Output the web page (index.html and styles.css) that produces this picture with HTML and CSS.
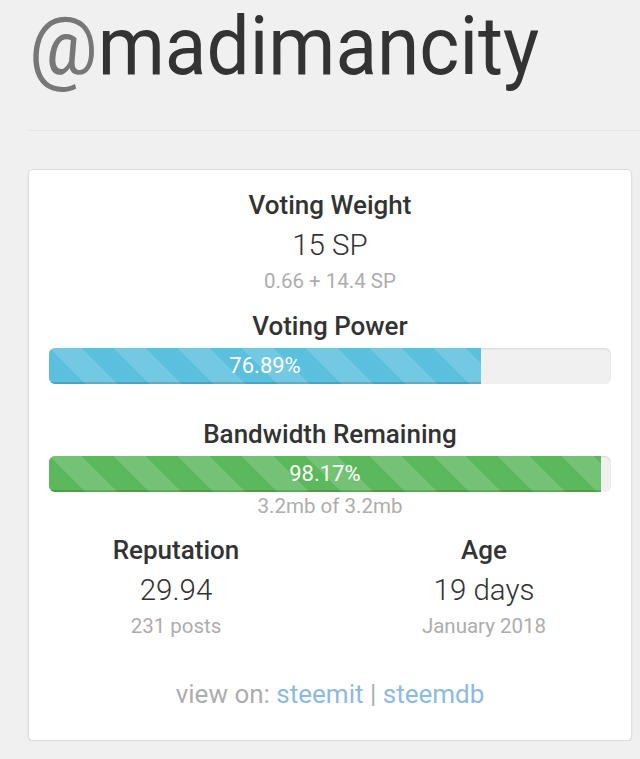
FILE: index.html
```html
<!DOCTYPE html>
<html lang="en">
	<head>
		<meta charset="UTF-8">
		<meta name="viewport" content="width=device-width, initial-scale=1.0">
		<title>@madimancity</title>
		<link rel="stylesheet" href="styles.css">
	</head>
	<body>
		<h1 class="title"><span class="name"><span class="at">@</span>madimancity</span></h1>
		<hr class="rule">
		<div class="card">
			<div class="stat">
				<h3>Voting Weight</h3>
				<div class="big">15 SP</div>
				<div class="small">0.66 + 14.4 SP</div>
			</div>
			<div class="stat vp">
				<h3>Voting Power</h3>
				<div class="progress">
					<div class="bar bar-blue" style="width:76.89%">76.89%</div>
				</div>
			</div>
			<div class="stat bw">
				<h3>Bandwidth Remaining</h3>
				<div class="progress">
					<div class="bar bar-green" style="width:98.17%">98.17%</div>
				</div>
				<div class="small">3.2mb of 3.2mb</div>
			</div>
			<div class="row">
				<div class="stat">
					<h3>Reputation</h3>
					<div class="big">29.94</div>
					<div class="small">231 posts</div>
				</div>
				<div class="stat">
					<h3>Age</h3>
					<div class="big">19 days</div>
					<div class="small">January 2018</div>
				</div>
			</div>
			<div class="links">
				view on: <a href="#">steemit</a> | <a href="#">steemdb</a>
			</div>
		</div>
	</body>
</html>
```
FILE: styles.css
```css
body{
	margin:0;
	background:#f0f0f0;
	font-family:Roboto,"Noto Sans",sans-serif;
	color:#333;
	overflow:hidden;
}

.title{
	margin:0;
	padding:0 0 0 29px;
	font-size:81px;
	font-weight:400;
	line-height:93px;
	color:#333;
	white-space:nowrap;
}

/*标题字体略窄*/
.name{
	display:inline-block;
	transform:scaleX(0.945);
	transform-origin:left center;
}

.at{
	color:#777;
}

.rule{
	margin:37px 0 0 28px;
	border:none;
	border-top:1px solid #e6e6e6;
}

.card{
	margin:38px 8px 0 28px;
	background:#fff;
	border:1px solid #dcdcdc;
	border-radius:5px;
	box-shadow:0 1px 2px rgba(0,0,0,0.08);
	padding:17px 20px 28px 20px;
}

.stat{
	text-align:center;
}

.stat h3{
	margin:0;
	font-size:26px;
	font-weight:500;
	line-height:36px;
	color:#333;
}

.big{
	font-size:29.5px;
	font-weight:300;
	line-height:44px;
	color:#333;
}

.small{
	font-size:20.5px;
	line-height:28px;
	color:#adadad;
}

/*进度条*/
.progress{
	margin-top:4px;
	height:36px;
	background:#f0f0f0;
	border-radius:6px;
	box-shadow:inset 0 1px 2px rgba(0,0,0,0.1);
	overflow:hidden;
	display:flex;
}

.bar{
	height:100%;
	color:#fff;
	font-size:22px;
	line-height:36px;
	text-align:center;
	box-shadow:inset 0 -2px 0 rgba(0,0,0,0.15);
	background-size:64px 64px;
	background-image:linear-gradient(45deg,rgba(255,255,255,0.15) 25%,transparent 25%,transparent 50%,rgba(255,255,255,0.15) 50%,rgba(255,255,255,0.15) 75%,transparent 75%,transparent);
}

.bar-blue{
	background-color:#5bc0de;
}

.bar-green{
	background-color:#5cb85c;
}

.vp{
	margin-top:13px;
}

.bw{
	margin-top:32px;
}

.row{
	display:grid;
	grid-template-columns:240px 240px;
	column-gap:68px;
	justify-content:center;
	margin:12px -20px 0 -20px;
}

.links{
	margin-top:36px;
	text-align:center;
	font-size:26px;
	line-height:36px;
	color:#adadad;
}

.links a{
	color:#8cbbe0;
	text-decoration:none;
}
```
